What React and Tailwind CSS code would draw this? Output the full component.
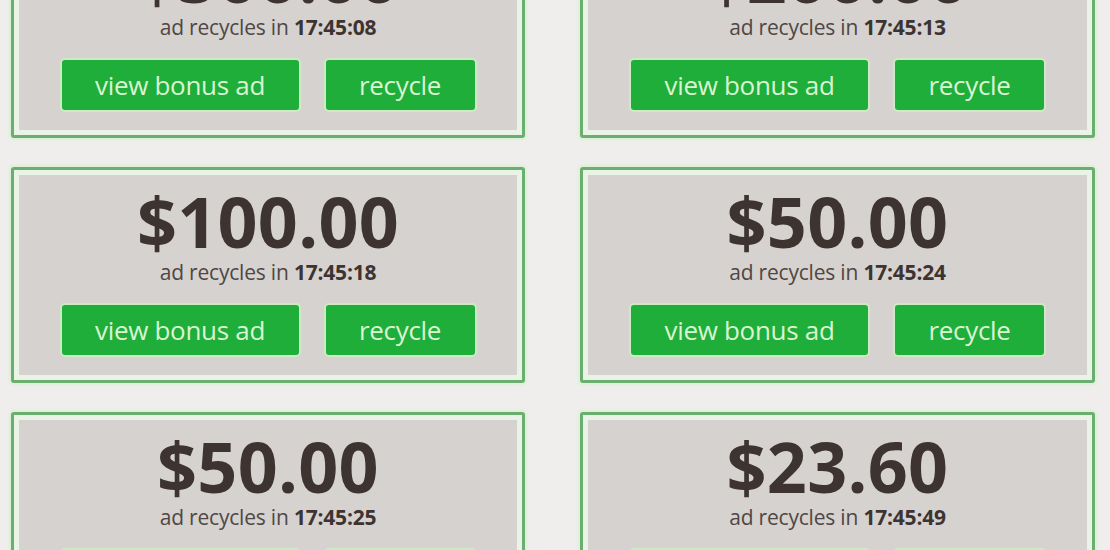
const ads = [
  { amount: "$500.00", time: "17:45:08" },
  { amount: "$200.00", time: "17:45:13" },
  { amount: "$100.00", time: "17:45:18" },
  { amount: "$50.00", time: "17:45:24" },
  { amount: "$50.00", time: "17:45:25" },
  { amount: "$23.60", time: "17:45:49" },
];

const AdCard = ({ amount, time }) => {
  return (
    <div className="border-[3px] border-[#6aae70] rounded-[3px] p-[5px] bg-[#eaf4e6] shadow-[0_0_3px_2px_#dcf0d6]">
      <div className="h-[200px] bg-[#d6d2cf] flex flex-col items-center pt-[12px]">
        <div className="text-[70px] leading-[68px] font-bold text-[#3d3431] tracking-[0.3px]">
          {amount}
        </div>
        <div className="mt-[6px] text-[21px] leading-[22px] text-[#4f4744] tracking-[-0.2px]">
          ad recycles in <span className="font-bold text-[#3d3431]">{time}</span>
        </div>
        <div className="mt-[20px] flex gap-[23px]">
          <button className="w-[241px] h-[54px] rounded-[5px] border-2 border-[#cdeac5] bg-[#1fae3a] text-[26px] text-[#d9f5d2] tracking-[-0.3px]">
            view bonus ad
          </button>
          <button className="w-[153px] h-[54px] rounded-[5px] border-2 border-[#cdeac5] bg-[#1fae3a] text-[26px] text-[#d9f5d2] tracking-[-0.3px]">
            recycle
          </button>
        </div>
      </div>
    </div>
  );
};

export default function App() {
  return (
    <div
      className="w-[1110px] h-[550px] overflow-hidden bg-[#efeeec] pl-[11px]"
      style={{ fontFamily: '"Open Sans", "Liberation Sans", sans-serif' }}
    >
      <div className="-mt-[78px] grid grid-cols-[514px_515px] gap-x-[55px] gap-y-[29px]">
        {ads.map((ad, i) => (
          <AdCard key={i} amount={ad.amount} time={ad.time} />
        ))}
      </div>
    </div>
  );
}
